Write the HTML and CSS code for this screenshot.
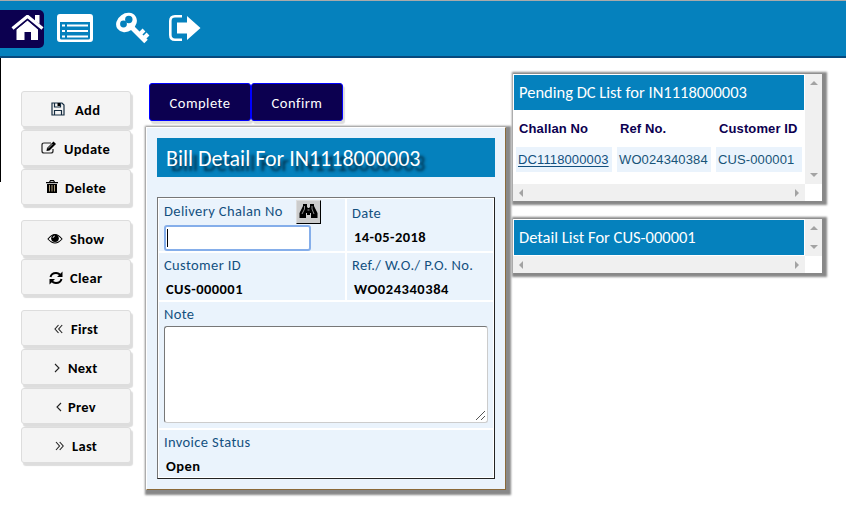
FILE: index.html
```html
<!DOCTYPE html>
<html lang="en">
<head>
<meta charset="utf-8">
<title>Bill Detail</title>
<link rel="stylesheet" href="styles.css">
</head>
<body>
<header class="topbar">
  <a class="home"><svg width="33" height="26" viewBox="0 0 33 26"><path fill="none" stroke="#fff" stroke-width="3.200" d="m1.500 13.500 15-12.200 15 12.200"/><path fill="#fff" d="M24 0h4.500v9L24 6zM16.500 5.500 27 14.500V25H20v-8h-6.500v8H5.500V14.500z"/><path fill="none" stroke="#0c0050" stroke-width=".9" d="m3.500 15.500 13-10.700 13 10.700"/></svg></a>
  <svg class="i-list" width="36" height="28" viewBox="0 0 36 28"><path fill="#fff" fill-rule="evenodd" d="M3 0h30q3 0 3 3v22q0 3-3 3H3q-3 0-3-3V3q0-3 3-3zM3 8v16q0 1.500 1.500 1.500h27q1.500 0 1.500-1.500V8z"/><path stroke="#fff" stroke-width="2" d="M5 11.500h3m2 0h21M5 17h3m2 0h21M5 22.500h3m2 0h21"/></svg>
  <svg class="i-key" width="34" height="32" viewBox="0 0 34 32"><ellipse cx="10.500" cy="10.500" rx="11" ry="9" fill="#fff" transform="rotate(-35 10.500 10.500)"/><g fill="#0581bd"><circle cx="12.800" cy="7.500" r="3.700"/><circle cx="7.500" cy="12" r="3.400"/></g><g fill="none" stroke="#fff"><path stroke-width="5" d="m16 15.500 14 14"/><path stroke-width="4" d="m23 23 5-5m-1 9 5-5"/></g></svg>
  <svg class="i-out" width="32" height="26" viewBox="0 0 32 26"><path fill="none" stroke="#fff" stroke-width="2.600" d="M13 1.300H6Q1.300 1.300 1.300 6v14q0 4.700 4.700 4.700h7"/><path fill="#fff" d="M8 7.500h10V1l13.500 12L18 25v-6.500H8z"/></svg>
</header>
<div class="page">
  <div class="edge"></div>
  <nav class="side">
    <div class="group">
      <button><svg class="ic g-add" viewBox="0 0 14 14"><path fill="none" stroke="#142c40" stroke-width="1.200" d="M1 1h10l2 2v10H1zM3.500 13V8.500h7V13M3.500 1v4h6V1"/><path d="M6.500 1H9v3H6.500z"/></svg><span>Add</span></button>
      <button><svg class="ic w15 g-upd" viewBox="0 0 15 14"><path fill="none" stroke="#222" stroke-width="1.200" d="M10 2H3Q1 2 1 4v6q0 2 2 2h7q2 0 2-2V8"/><path d="m5.500 10 .5-3 6.500-6.500 2.500 2.500L8.500 9.500z"/><path stroke="#eee" stroke-width=".7" d="m7 7.500 4.500-4.500"/></svg><span>Update</span></button>
      <button><svg class="ic w12 g-del" viewBox="0 0 12 14"><path d="M1 4h10v9H1zM0 2h12v1.300H0z"/><path fill="none" stroke="#000" stroke-width="1.200" d="M3.500 2 4.500.700h3L8.500 2"/><path stroke="#d8c49a" stroke-width=".8" d="M3.500 5v6.500M6 5v6.500M8.500 5v6.500"/></svg><span>Delete</span></button>
    </div>
    <div class="group">
      <button><svg class="ic w16 g-show" viewBox="0 0 16 12"><path fill="#fff" stroke="#000" stroke-width="1.100" d="M1 6q7-9 14 0-7 8-14 0z"/><circle cx="8" cy="5.200" r="3.800"/><path fill="none" stroke="#fff" stroke-width=".8" d="M6 5q0-2 2-2"/></svg><span>Show</span></button>
      <button><svg class="ic g-clr" viewBox="0 0 14 14"><path fill="none" stroke="#000" stroke-width="2" d="M1.500 6q1-4 5.500-4 3 0 4.500 2.500M12.500 8q-1 4-5.500 4-3 0-4.500-2.500"/><path d="M13.500.500V6H8zM.500 13.500V8H6z"/></svg><span>Clear</span></button>
    </div>
    <div class="group">
      <button><svg class="ic w9 g-first" viewBox="0 0 9 10"><path fill="none" stroke="#222" stroke-width="1.100" d="M4.500 1 1 5l3.500 4M8.200 1 4.700 5l3.500 4"/></svg><span>First</span></button>
      <button><svg class="ic w6 g-next" viewBox="0 0 6 10"><path fill="none" stroke="#222" stroke-width="1.100" d="m1 1 4 4-4 4"/></svg><span>Next</span></button>
      <button><svg class="ic w6 g-prev" viewBox="0 0 6 10"><path fill="none" stroke="#222" stroke-width="1.100" d="M5 1 1 5l4 4"/></svg><span>Prev</span></button>
      <button><svg class="ic w9 g-last" viewBox="0 0 9 10"><path fill="none" stroke="#222" stroke-width="1.100" d="m1 1 3.500 4L1 9M4.700 1l3.500 4-3.500 4"/></svg><span>Last</span></button>
    </div>
  </nav>
  <main>
    <div class="actions"><button class="complete">Complete</button><button class="confirm">Confirm</button></div>
    <section class="bill">
      <h1>Bill Detail For IN1118000003</h1>
      <div class="form">
        <div class="cell">
          <div class="lookup"><label>Delivery Chalan No</label>
            <span class="find"><svg width="19" height="16" viewBox="0 0 19 16"><path d="M4 0h4v3l1 1h1l1-1V0h4v2l3.500 7v5h-6.500V9h-1v2H8V9H7v5H.500V9L4 2z"/><path stroke="#ccc" stroke-width=".7" d="M5.500 2v3L3 10M13 2v3l2 5M8.500 6h2"/></svg></span></div>
          <div class="input"><i></i></div>
        </div>
        <div class="cell date"><label>Date</label><b>14-05-2018</b></div>
        <div class="cell"><label>Customer ID</label><b>CUS-000001</b></div>
        <div class="cell"><label>Ref./ W.O./ P.O. No.</label><b class="wo">WO024340384</b></div>
        <div class="cell wide"><label>Note</label><div class="note"><svg width="9" height="9" viewBox="0 0 9 9"><path stroke="#555" stroke-width="1" d="m0 9 9-9M5 9l4-4"/></svg></div></div>
        <div class="cell wide"><label>Invoice Status</label><b>Open</b></div>
      </div>
    </section>
  </main>
  <aside>
    <section class="list pending">
      <div class="content"><h2>Pending DC List for IN1118000003</h2>
        <div class="table"><strong>Challan No</strong><strong>Ref No.</strong><strong>Customer ID</strong>
        <span><a>DC1118000003</a></span><span>WO024340384</span><span>CUS-000001</span></div></div>
      <div class="vbar"><i class="up"></i><i class="down"></i></div>
      <div class="hbar"><i class="left"></i><i class="right"></i></div>
    </section>
    <section class="list detail">
      <div class="content"><h2>Detail List For CUS-000001</h2></div>
      <div class="vbar"><i class="up"></i><i class="down"></i></div>
      <div class="hbar"><i class="left"></i><i class="right"></i></div>
    </section>
  </aside>
</div>
</body>
</html>
```
FILE: styles.css
```css
* { box-sizing: border-box; }
body { margin: 0; background: #fff; height: 511px; overflow: hidden; font-family: Calibri, Carlito, Lato, sans-serif; color: #000; }
svg { display: block; flex: none; }
button { font: inherit; margin: 0; padding: 0; }
.topbar { height: 58px; border-top: 1px solid #aaa; border-bottom: 2px solid #074a7e; background: #0581bd; display: flex; align-items: flex-start; }
.home { width: 44px; height: 38px; margin-top: 9px; padding: 5px 0 0 11px; background: #0c0050; border-radius: 0 5px 5px 0; }
.i-list { margin: 13px 0 0 13px; }
.i-key { margin: 11px 0 0 23px; }
.i-out { margin: 14px 0 0 19px; }
.page { display: flex; align-items: flex-start; }
.edge { width: 1px; height: 124px; background: #000; }
.side { width: 110px; margin: 33px 0 0 20px; display: flex; flex-direction: column; gap: 15px; }
.group { display: flex; flex-direction: column; gap: 3px; }
.group button { height: 36px; border: 1px solid #ddd; border-radius: 3px; background: #f4f4f4; box-shadow: 2px 3px 1px #ddd; display: flex; align-items: center; justify-content: flex-start; font-size: 14.5px; font-weight: 700; letter-spacing: .3px; }
.group span { padding-top: 2px; }
.ic { width: 14px; height: 14px; }
.w15 { width: 15px; } .w12 { width: 12px; } .w16 { width: 16px; } .w9 { width: 9px; height: 10px; } .w6 { width: 6px; height: 10px; }
.g-add { margin: 0 10px 0 29px; }
.g-upd { margin: 0 8px 0 19px; }
.g-del { margin: 0 7px 0 24px; }
.g-show { margin: 1px 7px 0 25px; }
.g-clr { margin: 1px 7px 0 27px; }
.g-first { margin: 2px 8px 0 32px; }
.g-next { margin: 2px 8px 0 32px; }
.g-prev { margin: 2px 6px 0 34px; }
.g-last { margin: 2px 8px 0 33px; }
main { width: 360px; margin: 25px 0 0 15px; }
.actions { display: flex; padding-left: 3px; height: 38px; }
.actions button { height: 38px; border: 1px solid #00f; border-radius: 3px; background: #0c0050; color: #fff; font-size: 14.5px; letter-spacing: .5px; padding-top: 2px; box-shadow: 2px 3px 1px #ddd; }
.complete { width: 102px; } .confirm { width: 92px; }
.bill { margin-top: 6px; height: 363px; background: #eaf3fc; border: 1px solid; border-color: #fff #8b6a3a #8b6a3a #fff; box-shadow: 2px 2px 2px 3px #888; padding: 10px; }
h1, h2 { margin: 0; font-weight: 400; color: #fff; background: #0581bd; white-space: nowrap; }
h1 { height: 39px; line-height: 41px; padding-left: 9px; font-size: 22px; text-shadow: 5px 5px 3px #00283f; }
.form { margin-top: 20px; height: 282px; border: 1px solid; border-color: #777 #222 #222 #777; background: #fff; padding: 1px; display: grid; grid-template-columns: 186px 1fr; grid-template-rows: 52px 47px 126px 47px; gap: 2px; }
.cell { background: #eaf3fc; padding: 3px 5px; font-size: 14.500px; min-width: 0; }
.cell label { display: block; line-height: 18px; color: #13507f; letter-spacing: .38px; white-space: nowrap; }
.cell b { display: block; line-height: 18px; margin: 6px 0 0 2px; letter-spacing: .45px; }
.cell b.wo { letter-spacing: .55px; }
.cell.date { padding-top: 5px; }
.wide { grid-column: 1 / 3; }
.lookup { display: flex; justify-content: space-between; height: 23px; }
.find { width: 25px; height: 24px; margin: -2px 19px 0 0; background: #ccc; border: 1px solid; border-color: #ddd #000 #000 #ddd; padding: 3px 2px; }
.input { width: 147px; height: 26px; border: 2px solid #85aeea; border-radius: 3px; background: #fff; padding: 2px 0 0 1px; }
.input i { display: block; width: 1px; height: 18px; background: #000; }
.note { width: 324px; height: 97px; margin-top: 3px; border: 1px solid; border-color: #777 #ccc #ccc #777; border-radius: 3px; background: #fff; display: flex; justify-content: flex-end; align-items: flex-end; padding: 2px; }
aside { width: 309px; margin: 16px 0 0 7px; }
.list { display: grid; grid-template-columns: 292px 17px; grid-template-rows: 1fr 17px; background: #fff; box-shadow: 2px 1px 2px 3px #888; }
.pending { height: 127px; }
.detail { height: 54px; margin-top: 18px; }
.content { padding: 1px 1px 0; }
h2 { height: 35px; line-height: 35px; padding-left: 5px; font-size: 16.5px; }
.table { display: grid; grid-template-columns: 96px 94px 86px; column-gap: 5px; padding: 6px 0 0 2px; font: 13px/25px "Liberation Sans", sans-serif; letter-spacing: .12px; color: #185478; }
.table strong { height: 31px; padding-left: 3px; color: #0c0050; white-space: nowrap; }
.table span { height: 25px; padding-left: 2px; background: #eaf3fc; white-space: nowrap; }
.table a { text-decoration: underline; text-underline-offset: 2px; color: #13507f; }
.vbar, .hbar { background: #f0f0f0; display: flex; justify-content: space-between; align-items: center; }
.vbar { flex-direction: column; padding: 7px 0; }
.hbar { padding: 0 6px; }
.vbar i, .hbar i { border: 4px solid transparent; }
.vbar .up { border-top: 0; border-bottom-color: #a3a3a3; }
.vbar .down { border-bottom: 0; border-top-color: #a3a3a3; }
.hbar .left { border-left: 0; border-right-color: #a3a3a3; }
.hbar .right { border-right: 0; border-left-color: #a3a3a3; }
```
